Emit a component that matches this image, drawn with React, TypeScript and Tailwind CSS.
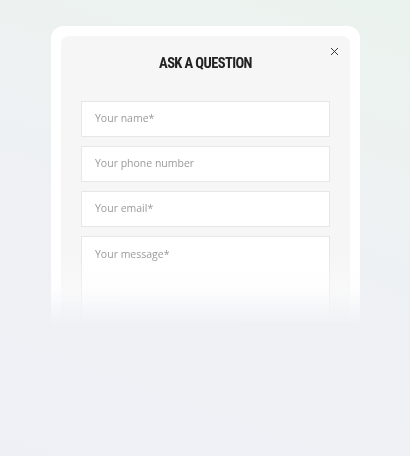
import { X } from "lucide-react";

const fields = ["Your name*", "Your phone number", "Your email*"];

export default function App() {
  return (
    <div className="flex w-[412px] h-[456px] bg-white">
      <div className="w-[410px] h-full bg-[linear-gradient(200deg,#ebf3ee_0%,#eef1f3_45%,#eff0f6_100%)] pt-[26px] pl-[51px]">
        <div className="relative w-[309px] h-[304px] overflow-hidden rounded-[12px] bg-white p-[10px] [mask-image:linear-gradient(to_bottom,black_86%,transparent_100%)]">
          <div className="h-full rounded-[8px] bg-[#f6f6f6] px-[20px] pt-[20px]">
            <div className="relative flex justify-center">
              <h2 className="text-[14.5px] font-bold text-[#222] tracking-[-0.6px] [font-family:'Liberation_Sans_Narrow','Roboto_Condensed',Roboto,sans-serif] leading-[14px] mt-[1px]">
                ASK A QUESTION
              </h2>
              <button className="absolute right-[-11px] top-[-11px] text-[#333]">
                <X className="h-[13px] w-[13px]" strokeWidth={1.8} />
              </button>
            </div>
            <div className="mt-[30px] flex flex-col gap-[9px]">
              {fields.map((f) => (
                <div
                  key={f}
                  className="flex h-[36px] items-center border border-[#e7e7e7] bg-white px-[13px] text-[10.5px] text-[#9a9a9a] [font-family:'Open_Sans',sans-serif]"
                >
                  {f}
                </div>
              ))}
              <div className="h-[90px] border border-[#e7e7e7] bg-white px-[13px] pt-[10px] text-[10.5px] text-[#9a9a9a] [font-family:'Open_Sans',sans-serif]">
                Your message*
              </div>
            </div>
          </div>
          <div className="absolute inset-x-0 bottom-0 h-[75px] bg-[linear-gradient(to_bottom,rgba(255,255,255,0)_0%,rgba(252,252,253,0.55)_55%,rgba(248,249,250,0.8)_100%)]" />
        </div>
      </div>
    </div>
  );
}
